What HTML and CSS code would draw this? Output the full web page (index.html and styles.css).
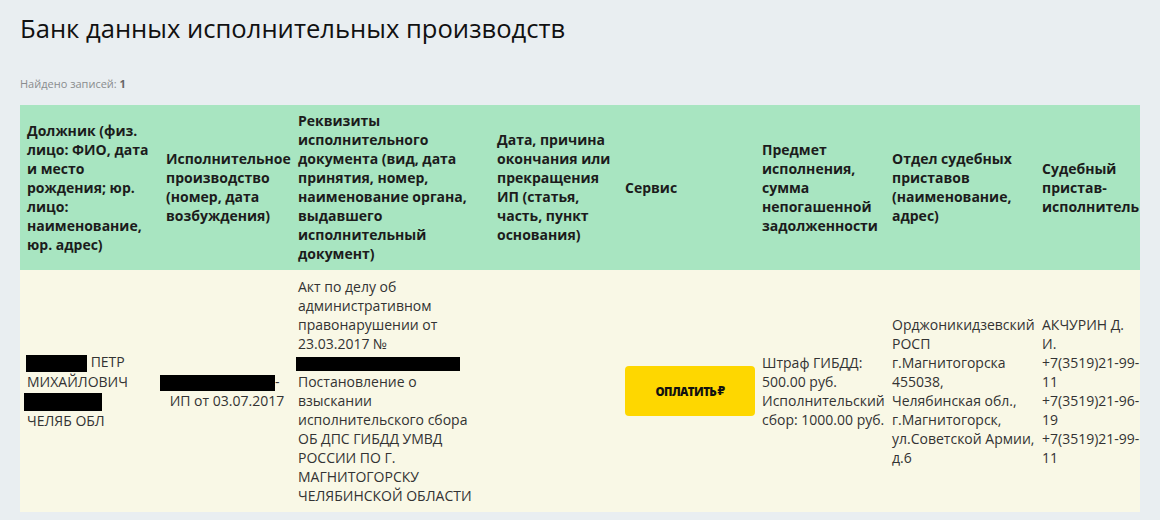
FILE: index.html
```html
<!DOCTYPE html>
<html lang="ru">
<head>
<meta charset="utf-8">
<title>Банк данных исполнительных производств</title>
<link rel="stylesheet" href="styles.css">
</head>
<body>
<div class="page">
  <h1 class="title">Банк данных исполнительных производств</h1>
  <div class="found">Найдено записей: <b>1</b></div>
  <div class="table-wrap">
    <table class="results">
      <colgroup>
        <col class="c1"><col class="c2"><col class="c3"><col class="c4"><col class="c5"><col class="c6"><col class="c7"><col class="c8">
      </colgroup>
      <thead>
        <tr>
          <th>Должник (физ. лицо: ФИО, дата и место рождения; юр. лицо: наименование, юр. адрес)</th>
          <th>Исполнительное производство (номер, дата возбуждения)</th>
          <th>Реквизиты исполнительного документа (вид, дата принятия, номер, наименование органа, выдавшего исполнительный документ)</th>
          <th>Дата, причина окончания или прекращения ИП (статья, часть, пункт основания)</th>
          <th>Сервис</th>
          <th>Предмет исполнения, сумма непогашенной задолженности</th>
          <th>Отдел судебных приставов (наименование, адрес)</th>
          <th>Судебный пристав-исполнитель</th>
        </tr>
      </thead>
      <tbody>
        <tr>
          <td><span class="redact r1"></span> ПЕТР<br>МИХАЙЛОВИЧ<br><span class="redact r2"></span><br>ЧЕЛЯБ ОБЛ</td>
          <td><span class="redact r3"></span>-<br>&nbsp;ИП от 03.07.2017</td>
          <td>Акт по делу об административном правонарушении от 23.03.2017 №<br><span class="redact r4"></span><br>Постановление о взыскании исполнительского сбора ОБ ДПС ГИБДД УМВД РОССИИ ПО Г. МАГНИТОГОРСКУ ЧЕЛЯБИНСКОЙ ОБЛАСТИ</td>
          <td></td>
          <td><button class="pay" type="button">Оплатить<span class="rub">₽</span></button></td>
          <td>Штраф ГИБДД: 500.00 руб.<br>Исполнительский сбор: 1000.00 руб.</td>
          <td>Орджоникидзевский РОСП г.Магнитогорска 455038, Челябинская обл., г.Магнитогорск, ул.Советской Армии, д.6</td>
          <td>АКЧУРИН Д. И.<br>+7(3519)21-99-11<br>+7(3519)21-96-19<br>+7(3519)21-99-11</td>
        </tr>
      </tbody>
    </table>
  </div>
</div>
</body>
</html>
```
FILE: styles.css
```css
html, body {
  margin: 0;
  padding: 0;
  background: #e9eef1;
}
body {
  font-family: "Open Sans", "DejaVu Sans", sans-serif;
  color: #333;
}
.page {
  padding: 13px 20px 0;
}
.title {
  margin: 0;
  font-size: 25.6px;
  font-weight: 500;
  line-height: 32px;
  color: #111;
}
.found {
  margin-top: 31px;
  font-size: 11px;
  line-height: 16px;
  color: #8a8c8e;
}
.found b {
  color: #666;
}
.table-wrap {
  margin-top: 13px;
  width: 1120px;
  overflow: hidden;
}
.results {
  width: 1120px;
  border-collapse: collapse;
  table-layout: fixed;
  font-size: 14px;
  line-height: 19px;
}
.c1 { width: 139px; }
.c2 { width: 132px; }
.c3 { width: 199px; }
.c4 { width: 128px; }
.c5 { width: 137px; }
.c6 { width: 130px; }
.c7 { width: 150px; }
.c8 { width: 105px; }
.results th {
  background: #a8e5c1;
  color: #1c1c1c;
  font-weight: 700;
  text-align: left;
  vertical-align: middle;
  padding: 6px 0 7px 7px;
}
.results td {
  background: #f9f8e6;
  color: #333;
  text-align: left;
  vertical-align: middle;
  padding: 7px 0 7px 7px;
}
.redact {
  display: inline-block;
  background: #000;
  vertical-align: middle;
}
.r1 { width: 61px; height: 17px; margin-left: -1px; }
.r2 { width: 78px; height: 18px; margin-left: -3px; }
.r3 { width: 115px; height: 16px; margin-left: -6px; }
.r4 { width: 164px; height: 14px; margin-left: -2px; }
.pay {
  display: flex;
  align-items: center;
  justify-content: center;
  width: 130px;
  height: 50px;
  border: 0;
  border-radius: 4px;
  background: #fed700;
  color: #111;
  font-family: "Open Sans", "DejaVu Sans", sans-serif;
  font-size: 11.5px;
  font-weight: 800;
  text-transform: uppercase;
  letter-spacing: -0.6px;
  padding: 0;
}
.rub {
  font-family: "DejaVu Sans", sans-serif;
  font-weight: 700;
  margin-left: 1px;
}
```
